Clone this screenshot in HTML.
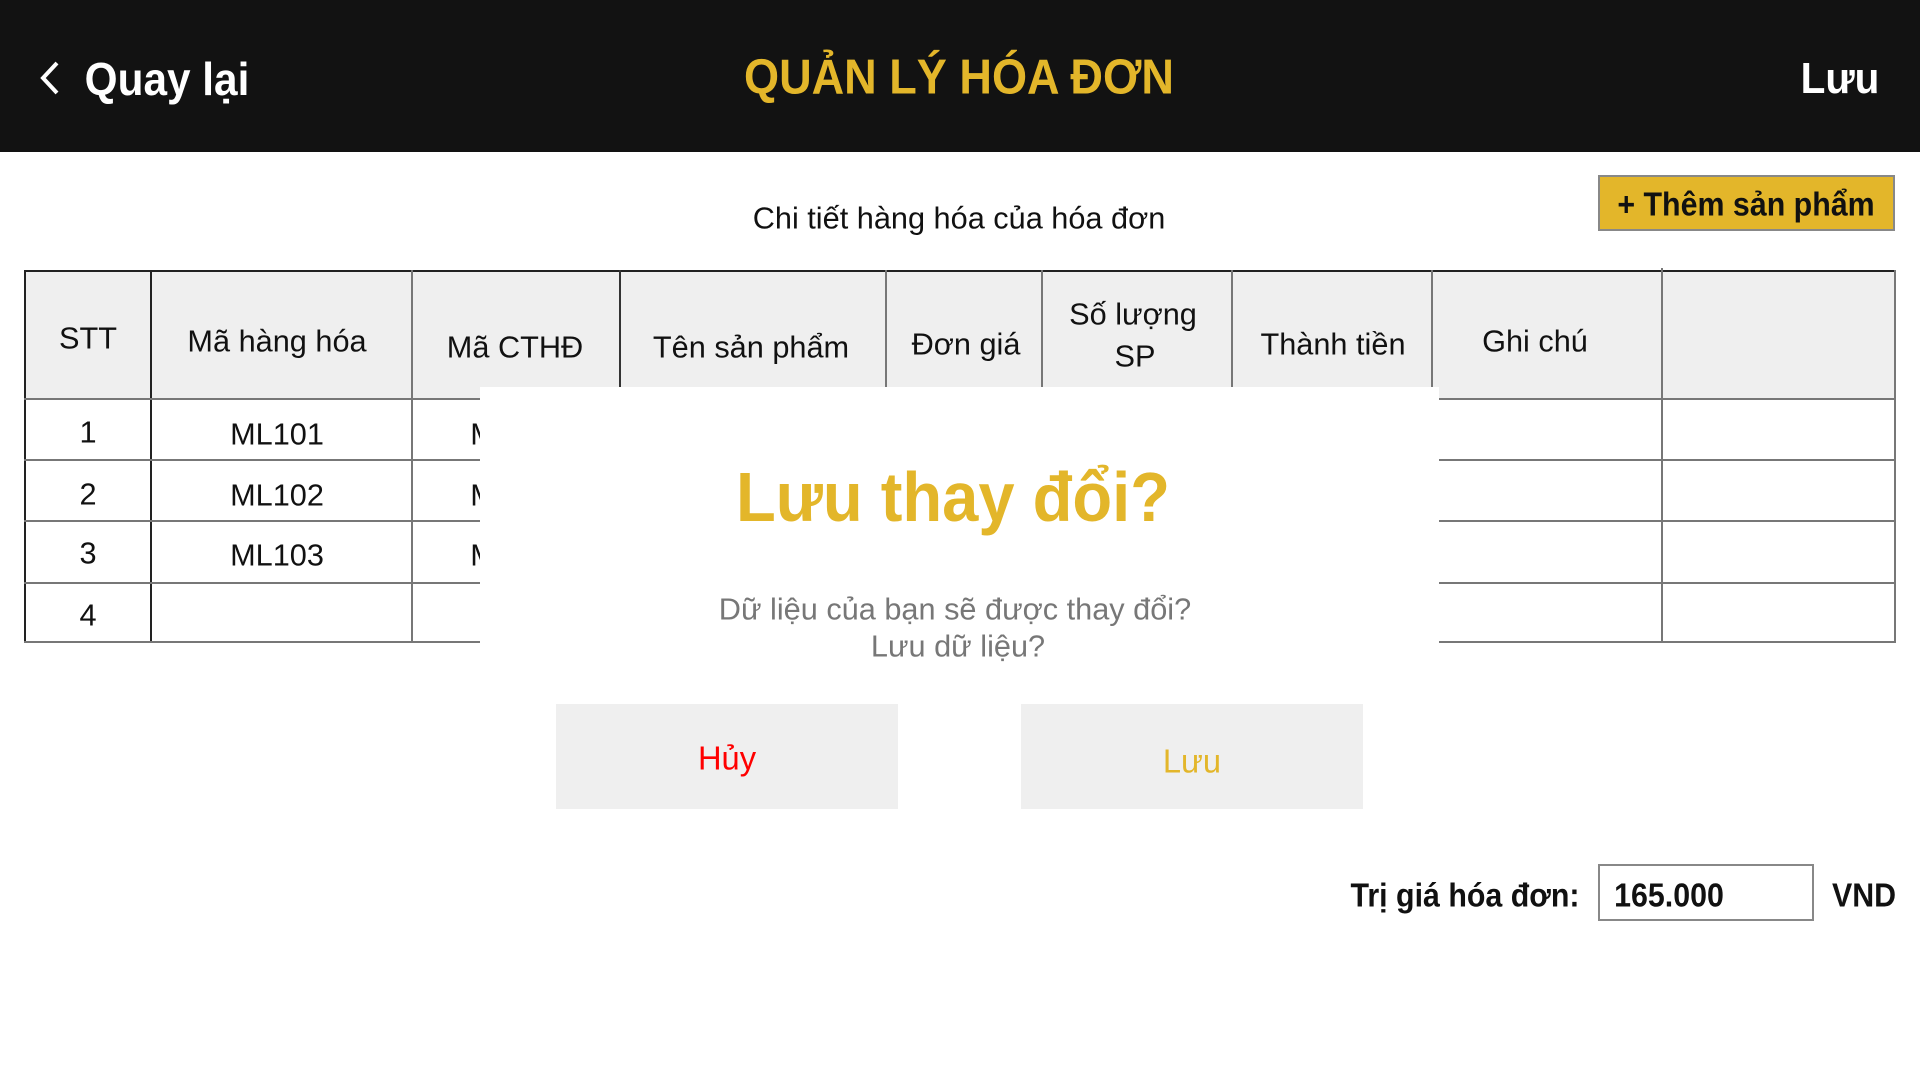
<!DOCTYPE html>
<html><head><meta charset="utf-8"><style>
*{margin:0;padding:0;box-sizing:border-box}
body{width:1920px;height:1077px;background:#fff;position:relative;overflow:hidden;font-family:"Liberation Sans","DejaVu Sans",sans-serif;color:#111}
.t{position:absolute;white-space:nowrap;transform:translate(-50%,-50%) scaleX(.99);line-height:1}
.b{font-weight:bold;transform:translate(-50%,-50%) scaleX(.92)}
.hdr{position:absolute;left:0;top:0;width:1920px;height:152px;background:#121212}
</style></head><body>
<div class="hdr"></div>
<svg style="position:absolute;left:38px;top:60px" width="24" height="36" viewBox="0 0 24 36"><path d="M19 3 L5 18 L19 33" fill="none" stroke="#fff" stroke-width="4"/></svg>
<div class="t b" style="left:167px;top:79px;font-size:46px;color:#fff">Quay lại</div>
<div class="t b" style="left:959px;top:78px;font-size:49px;color:#e3b62a">QUẢN LÝ HÓA ĐƠN</div>
<div class="t b" style="left:1840px;top:79px;font-size:44px;color:#fff">Lưu</div>

<div class="t" style="left:959px;top:218px;font-size:31px">Chi tiết hàng hóa của hóa đơn</div>
<div style="position:absolute;left:1598px;top:175px;width:297px;height:56px;background:#e3b62a;border:2px solid #888"></div>
<div class="t b" style="left:1746px;top:204px;font-size:33px">+ Thêm sản phẩm</div>

<div style="position:absolute;left:24px;top:271px;width:1871px;height:128px;background:#efefef"></div>
<div style="position:absolute;left:24px;top:270px;width:1871px;height:2px;background:#222"></div>
<div style="position:absolute;left:24px;top:270px;width:2px;height:373px;background:#222"></div>
<div style="position:absolute;left:150px;top:270px;width:2px;height:373px;background:#222"></div>
<div style="position:absolute;left:411px;top:270px;width:2px;height:373px;background:#777"></div>
<div style="position:absolute;left:619px;top:270px;width:2px;height:129px;background:#333"></div>
<div style="position:absolute;left:885px;top:270px;width:2px;height:129px;background:#777"></div>
<div style="position:absolute;left:1041px;top:270px;width:2px;height:129px;background:#777"></div>
<div style="position:absolute;left:1231px;top:270px;width:2px;height:129px;background:#777"></div>
<div style="position:absolute;left:1431px;top:270px;width:2px;height:129px;background:#777"></div>
<div style="position:absolute;left:1661px;top:268px;width:2px;height:373px;background:#777"></div>
<div style="position:absolute;left:1894px;top:270px;width:2px;height:373px;background:#777"></div>
<div style="position:absolute;left:24px;top:398px;width:1871px;height:2px;background:#777"></div>
<div style="position:absolute;left:24px;top:459px;width:1871px;height:2px;background:#777"></div>
<div style="position:absolute;left:24px;top:520px;width:1871px;height:2px;background:#777"></div>
<div style="position:absolute;left:24px;top:582px;width:1871px;height:2px;background:#777"></div>
<div style="position:absolute;left:24px;top:641px;width:1871px;height:2px;background:#777"></div>

<div class="t" style="left:88px;top:338px;font-size:31px">STT</div>
<div class="t" style="left:277px;top:341px;font-size:31px">Mã hàng hóa</div>
<div class="t" style="left:515px;top:347px;font-size:31px">Mã CTHĐ</div>
<div class="t" style="left:751px;top:347px;font-size:31px">Tên sản phẩm</div>
<div class="t" style="left:966px;top:344px;font-size:31px">Đơn giá</div>
<div class="t" style="left:1133px;top:314px;font-size:31px">Số lượng</div>
<div class="t" style="left:1135px;top:356px;font-size:31px">SP</div>
<div class="t" style="left:1333px;top:344px;font-size:31px">Thành tiền</div>
<div class="t" style="left:1535px;top:341px;font-size:31px">Ghi chú</div>

<div class="t" style="left:88px;top:432px;font-size:31px">1</div>
<div class="t" style="left:88px;top:494px;font-size:31px">2</div>
<div class="t" style="left:88px;top:553px;font-size:31px">3</div>
<div class="t" style="left:88px;top:615px;font-size:31px">4</div>
<div class="t" style="left:277px;top:434px;font-size:31px">ML101</div>
<div class="t" style="left:277px;top:495px;font-size:31px">ML102</div>
<div class="t" style="left:277px;top:555px;font-size:31px">ML103</div>
<div class="t" style="left:483px;top:434px;font-size:31px">M</div>
<div class="t" style="left:483px;top:495px;font-size:31px">M</div>
<div class="t" style="left:483px;top:555px;font-size:31px">M</div>

<div style="position:absolute;left:480px;top:387px;width:959px;height:460px;background:#fff"></div>
<div class="t b" style="left:953px;top:497px;font-size:70px;color:#e3b62a;transform:translate(-50%,-50%) scaleX(.93)">Lưu thay đổi?</div>
<div class="t" style="left:955px;top:609px;font-size:31px;color:#777">Dữ liệu của bạn sẽ được thay đổi?</div>
<div class="t" style="left:958px;top:646px;font-size:31px;color:#777">Lưu dữ liệu?</div>
<div style="position:absolute;left:556px;top:704px;width:342px;height:105px;background:#efefef"></div>
<div style="position:absolute;left:1021px;top:704px;width:342px;height:105px;background:#efefef"></div>
<div class="t" style="left:727px;top:758px;font-size:33px;color:#f00">Hủy</div>
<div class="t" style="left:1192px;top:761px;font-size:33px;color:#e3b62a">Lưu</div>

<div class="t b" style="left:1465px;top:895px;font-size:33px">Trị giá hóa đơn:</div>
<div style="position:absolute;left:1598px;top:864px;width:216px;height:57px;border:2px solid #888"></div>
<div class="t b" style="left:1669px;top:895px;font-size:33px">165.000</div>
<div class="t b" style="left:1864px;top:895px;font-size:33px">VND</div>
</body></html>
